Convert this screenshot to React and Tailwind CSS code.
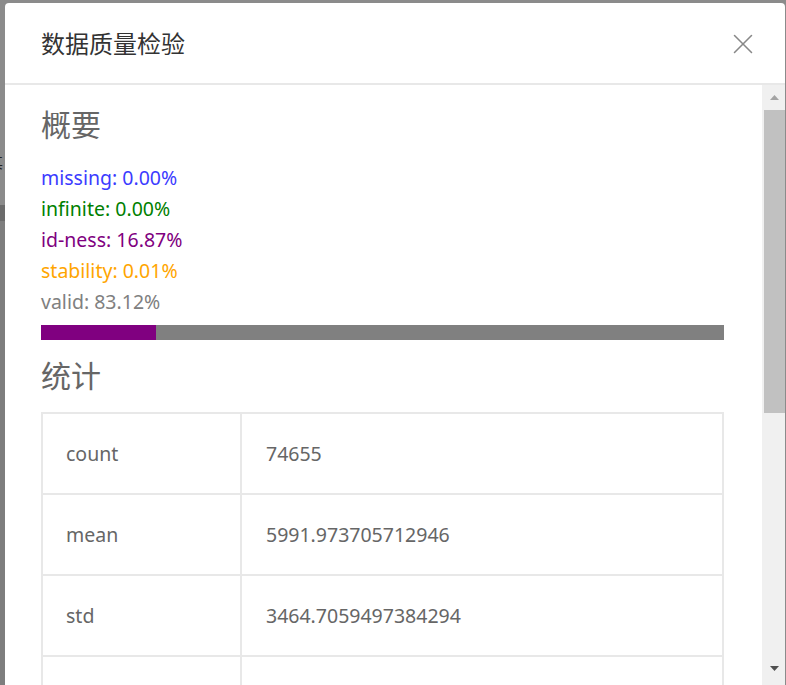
import { X } from "lucide-react";

const font = {
  fontFamily: '"Noto Sans", "Noto Sans CJK SC", sans-serif',
};

const summary = [
  { label: "missing", value: "0.00%", color: "text-[#3b3bff]" },
  { label: "infinite", value: "0.00%", color: "text-[#008000]" },
  { label: "id-ness", value: "16.87%", color: "text-[#800080]" },
  { label: "stability", value: "0.01%", color: "text-[#ffa500]" },
  { label: "valid", value: "83.12%", color: "text-[#808080]" },
];

const stats = [
  ["count", "74655"],
  ["mean", "5991.973705712946"],
  ["std", "3464.7059497384294"],
  ["min", "1.0"],
];

function Scrollbar() {
  return (
    <div className="flex w-[23px] shrink-0 flex-col bg-[#f0f0f0]">
      <div className="flex h-[25px] items-center justify-center pl-[2px]">
        <svg width="9" height="5" viewBox="0 0 9 5">
          <path d="M0 5 L4.5 0 L9 5 Z" fill="#a3a3a3" />
        </svg>
      </div>
      <div className="ml-[2px] h-[303px] bg-[#c1c1c1]" />
      <div className="flex-1" />
      <div className="flex h-[26px] items-start justify-center pl-[2px] pt-[7px]">
        <svg width="9" height="5" viewBox="0 0 9 5">
          <path d="M0 0 L9 0 L4.5 5 Z" fill="#505050" />
        </svg>
      </div>
    </div>
  );
}

export default function App() {
  return (
    <div className="flex h-[685px] overflow-hidden bg-[#8b8b8b]" style={font}>
      {/* left sliver of the page behind the overlay */}
      <div className="flex w-[5px] shrink-0 flex-col overflow-hidden">
        <div className="h-[152px]" />
        <div className="-ml-[12px] h-[20px] text-[15px] leading-[20px] text-[#222]">其</div>
        <div className="h-[33px]" />
        <div className="h-[16px] bg-[#6b6b6b]" />
        <div className="flex-1 bg-[#7e7e7e]" />
      </div>

      <div className="flex w-[780px] shrink-0 flex-col pt-[3px]">
        <div className="flex h-[700px] flex-col overflow-hidden rounded-t-[4px] bg-white">
          {/* header */}
          <div className="flex h-[82px] shrink-0 items-center justify-between border-b-2 border-[#e8e8e8] pl-9 pr-[25px] pt-[2px]">
            <h1 className="text-[24px] text-[#333]">数据质量检验</h1>
            <X size={34} strokeWidth={1.1} className="text-[#888]" />
          </div>

          {/* body */}
          <div className="flex flex-1 overflow-hidden">
            <div className="flex-1 pl-9 pr-[38px] pt-[20px]">
              <h2 className="text-[30px] leading-[40px] text-[#666]">概要</h2>
              <div className="mt-[17px] text-[19.5px] leading-[31px]">
                {summary.map((s) => (
                  <div key={s.label} className={s.color}>
                    {s.label}: {s.value}
                  </div>
                ))}
              </div>
              <div className="mt-[8px] flex h-[15px] bg-[#808080]">
                <div className="w-[16.87%] bg-[#800080]" />
              </div>
              <h2 className="mt-[16px] text-[30px] leading-[40px] text-[#666]">统计</h2>
              <div className="mt-[16px] border-r-2 border-[#e8e8e8] text-[19.5px] text-[#666]">
                {stats.map(([k, v]) => (
                  <div key={k} className="grid h-[81px] grid-cols-[199px_1fr]">
                    <div className="flex items-center border-l-2 border-t-2 border-[#e8e8e8] pl-[23px]">
                      {k}
                    </div>
                    <div className="flex items-center border-l-2 border-t-2 border-[#e8e8e8] pl-[24px]">
                      {v}
                    </div>
                  </div>
                ))}
              </div>
            </div>
            <Scrollbar />
          </div>
        </div>
      </div>
      <div className="w-[1px] shrink-0" />
    </div>
  );
}
